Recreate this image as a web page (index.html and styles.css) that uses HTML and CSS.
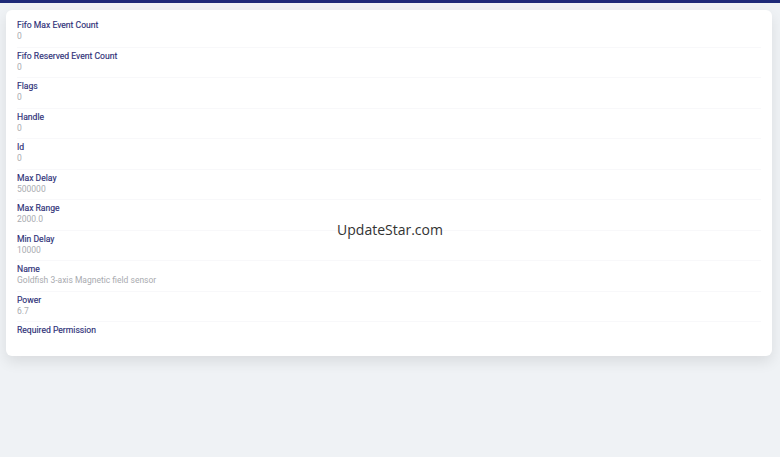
FILE: index.html
```html
<!DOCTYPE html>
<html>
<head>
<meta charset="utf-8">
<link rel="stylesheet" href="styles.css">
</head>
<body>
<div class="topbar"></div>
<main class="page">
  <section class="card">
    <div class="row"><div class="label">Fifo Max Event Count</div><div class="value">0</div></div>
    <div class="row"><div class="label">Fifo Reserved Event Count</div><div class="value">0</div></div>
    <div class="row"><div class="label">Flags</div><div class="value">0</div></div>
    <div class="row"><div class="label">Handle</div><div class="value">0</div></div>
    <div class="row"><div class="label">Id</div><div class="value">0</div></div>
    <div class="row"><div class="label">Max Delay</div><div class="value">500000</div></div>
    <div class="row"><div class="label">Max Range</div><div class="value">2000.0</div></div>
    <div class="row"><div class="label">Min Delay</div><div class="value">10000</div></div>
    <div class="row"><div class="label">Name</div><div class="value">Goldfish 3-axis Magnetic field sensor</div></div>
    <div class="row"><div class="label">Power</div><div class="value">6.7</div></div>
    <div class="row last"><div class="label">Required Permission</div><div class="value"></div></div>
  </section>
  <div class="watermark">UpdateStar.com</div>
</main>
</body>
</html>
```
FILE: styles.css
```css
html, body {
  margin: 0;
  padding: 0;
  height: 100%;
}
body {
  background: #eff2f5;
  font-family: Roboto, "Noto Sans", sans-serif;
}
.topbar {
  height: 3px;
  background: #1e2a78;
}
.page {
  position: relative;
  padding: 7px 8px 0 6px;
}
.card {
  background: #ffffff;
  border-radius: 6px;
  box-shadow: 0 6px 14px rgba(0, 0, 0, 0.09);
  padding: 6px 11px 5px;
}
.row {
  padding-top: 3px;
  padding-bottom: 4.5px;
  height: 23px;
  box-sizing: content-box;
  border-bottom: 1px solid #f8f8fa;
  margin-bottom: -1px;
}
.row.last {
  border-bottom: none;
}
.label {
  font-size: 8.6px;
  line-height: 12px;
  color: #2e3077;
  font-weight: 400;
  -webkit-text-stroke: 0.15px #2e3077;
}
.value {
  font-size: 8.5px;
  line-height: 11px;
  color: #a9abb0;
  min-height: 11px;
}
.watermark {
  position: absolute;
  left: 0;
  right: 0;
  top: 217px;
  text-align: center;
  font-family: "Open Sans", sans-serif;
  font-size: 14px;
  color: #333333;
}
```
